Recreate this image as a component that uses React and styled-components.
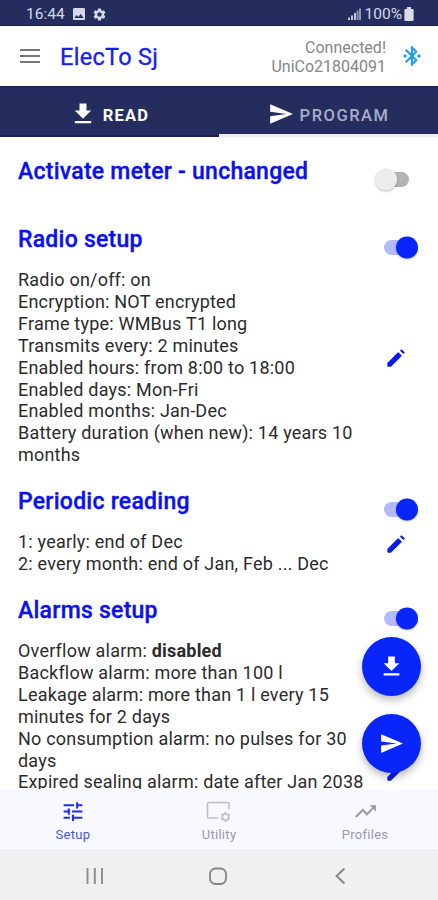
import React from 'react';
import styled, { createGlobalStyle } from 'styled-components';
import {
  MdBluetoothConnected,
  MdFileDownload,
  MdImage,
  MdSend,
  MdSettings,
  MdTrendingUp,
  MdTune,
} from 'react-icons/md';

const radioLines = [
  'Radio on/off: on',
  'Encryption: NOT encrypted',
  'Frame type: WMBus T1 long',
  'Transmits every: 2 minutes',
  'Enabled hours: from 8:00 to 18:00',
  'Enabled days: Mon-Fri',
  'Enabled months: Jan-Dec',
  'Battery duration (when new): 14 years 10 months',
];

const readingLines = [
  '1: yearly: end of Dec',
  '2: every month: end of Jan, Feb ... Dec',
];

const alarmLines = [
  <>
    Overflow alarm: <b>disabled</b>
  </>,
  'Backflow alarm: more than 100 l',
  'Leakage alarm: more than 1 l every 15 minutes for 2 days',
  'No consumption alarm: no pulses for 30 days',
  'Expired sealing alarm: date after Jan 2038',
];

const Pencil = () => (
  <svg
    width="24"
    height="24"
    viewBox="0 0 24 24"
    fill="currentColor"
    stroke="currentColor"
    strokeLinejoin="round"
  >
    <path d="M4 17.3V20h2.7L17 9.8 14.200 7z" strokeWidth="1.3" />
    <path d="M20.3 6.500 17.500 3.700 16.500 4.700 19.300 7.500z" strokeWidth="1" />
  </svg>
);

const Signal = () => (
  <svg width="13" height="13" viewBox="0 0 13 13">
    <path
      d="M0 9.5h2V12H0zM3 7.5h2V12H3zM6 5h2v7H6z"
      fill="#c3c7de"
    />
    <path d="M8.6 2.5h2V12h-2zM11 .5h2V12h-2z" fill="#8f95b8" />
  </svg>
);

const Battery = () => (
  <svg width="10" height="14" viewBox="0 0 10 14" fill="#d9dbe8">
    <path d="M3 0h4v2h1.6q1 0 1 1v10q0 1-1 1H1.4q-1 0-1-1V3q0-1 1-1H3z" />
  </svg>
);

const UtilityIcon = () => (
  <svg width="26" height="22" viewBox="0 0 26 22" fill="none" stroke="#bcbeca">
    <path d="M12 17.5H2.5q-1 0-1-1V3q0-1 1-1H22q1 0 1 1v6" strokeWidth="1.5" />
    <circle cx="19.5" cy="16.5" r="3.2" strokeWidth="1.6" />
    <path
      d="M19.5 11.5v1.6M19.5 20v1.6M15.2 14l1.4.8M22.4 18.2l1.4.8M15.2 19l1.4-.8M22.4 14.8l1.4-.8"
      strokeWidth="1.9"
    />
  </svg>
);

const Section = ({ title, on, lines, tall }) => (
  <Block>
    <TitleRow>
      <Title>{title}</Title>
      <Switch $on={on} />
    </TitleRow>
    {lines && (
      <Body $tall={tall}>
        <Lines>
          {lines.map((line, i) => (
            <p key={i}>{line}</p>
          ))}
        </Lines>
        <EditButton aria-label="Edit">
          <Pencil />
        </EditButton>
      </Body>
    )}
  </Block>
);

const App = () => (
  <>
    <GlobalStyle />
    <Screen>
      <StatusBar>
        <Clock>16:44</Clock>
        <MdImage size={16} />
        <MdSettings size={15} />
        <StatusRight>
          <Signal />
          <span>100%</span>
          <Battery />
        </StatusRight>
      </StatusBar>
      <Header>
        <MenuButton aria-label="Menu">
          <i />
          <i />
          <i />
        </MenuButton>
        <AppName>ElecTo Sj</AppName>
        <Connection>
          Connected!
          <br />
          UniCo21804091
        </Connection>
        <MdBluetoothConnected size={24} color="#1a9cf0" />
      </Header>
      <Tabs>
        <Tab $active>
          <MdFileDownload size={28} color="#fff" />
          <span>READ</span>
        </Tab>
        <Tab>
          <MdSend size={26} color="#fff" />
          <span>PROGRAM</span>
        </Tab>
      </Tabs>
      <Content>
        <Section title="Activate meter - unchanged" />
        <Section title="Radio setup" on lines={radioLines} />
        <Section title="Periodic reading" on lines={readingLines} />
        <Section title="Alarms setup" on lines={alarmLines} tall />
      </Content>
      <Fabs>
        <Fab aria-label="Read">
          <MdFileDownload size={27} />
        </Fab>
        <Fab aria-label="Program">
          <MdSend size={25} />
        </Fab>
      </Fabs>
      <BottomNav>
        <NavItem $active>
          <MdTune size={26} />
          <span>Setup</span>
        </NavItem>
        <NavItem>
          <UtilityIcon />
          <span>Utility</span>
        </NavItem>
        <NavItem>
          <MdTrendingUp size={25} />
          <span>Profiles</span>
        </NavItem>
      </BottomNav>
      <SystemBar>
        <svg width="18" height="18" viewBox="0 0 18 18" stroke="#8b8b8b">
          <path d="M1.5 1v16M8.8 1v16M16 1v16" strokeWidth="1.9" />
        </svg>
        <svg width="18" height="18" viewBox="0 0 18 18" fill="none" stroke="#858585">
          <rect x="1" y="1.5" width="16" height="15.5" rx="5.5" strokeWidth="1.8" />
        </svg>
        <svg width="18" height="18" viewBox="0 0 18 18" fill="none" stroke="#858585">
          <path d="M12.5 1.5 4.5 9l8 7.5" strokeWidth="1.8" />
        </svg>
      </SystemBar>
    </Screen>
  </>
);
export default App;

const GlobalStyle = createGlobalStyle`
  * {
    box-sizing: border-box;
  }
  body {
    margin: 0;
    font-family: Roboto, sans-serif;
  }
  p, h1, h2 {
    margin: 0;
  }
  button {
    border: 0;
    padding: 0;
    background: none;
    font: inherit;
  }
  svg {
    display: block;
    flex-shrink: 0;
  }
`;
const Screen = styled.div`
  position: relative;
  display: flex;
  flex-direction: column;
  width: 438px;
  height: 900px;
  overflow: hidden;
  background: #fff;
`;
const StatusBar = styled.div`
  display: flex;
  align-items: center;
  gap: 5px;
  height: 26px;
  padding: 3px 24px 0 26px;
  background: #252d5e;
  border-bottom: 1px solid #191d52;
  color: #d5d8e8;
  font-size: 15.5px;
  flex-shrink: 0;
`;
const Clock = styled.span`
  margin-right: 1px;
`;
const StatusRight = styled.div`
  display: flex;
  align-items: center;
  gap: 2px;
  margin-left: auto;
  span {
    margin-left: 2px;
  }
`;
const Header = styled.header`
  display: flex;
  align-items: center;
  height: 60px;
  padding: 0 14px 0 20px;
  flex-shrink: 0;
`;
const MenuButton = styled.button`
  display: flex;
  flex-direction: column;
  gap: 4px;
  width: 20px;
  margin-right: 20px;
  i {
    height: 2px;
    background: #777;
  }
`;
const AppName = styled.h1`
  padding-top: 2px;
  font-size: 23.5px;
  font-weight: 400;
  line-height: 28px;
  letter-spacing: 0.3px;
  color: #1620f2;
  -webkit-text-stroke: 0.3px #1620f2;
`;
const Connection = styled.p`
  margin-left: auto;
  margin-right: 14px;
  padding-top: 2px;
  text-align: right;
  font-size: 16px;
  line-height: 19px;
  color: #858585;
`;
const Tabs = styled.nav`
  display: grid;
  grid-template-columns: 1fr 1fr;
  height: 51px;
  background: #252d5e;
  border-top: 1px solid #191d52;
  flex-shrink: 0;
`;
const Tab = styled.div`
  display: flex;
  align-items: center;
  justify-content: center;
  gap: 6px;
  padding-top: ${({ $active }) => ($active ? '5px' : '6px')};
  padding-right: ${({ $active }) => ($active ? '1px' : '0')};
  border-bottom: ${({ $active }) =>
    $active ? '2px solid #191d52' : '3px solid #eeeef2'};
  color: ${({ $active }) => ($active ? '#fff' : '#a9adcb')};
  font-size: 16.5px;
  font-weight: ${({ $active }) => ($active ? 700 : 500)};
  letter-spacing: ${({ $active }) => ($active ? '1.2px' : '1.5px')};
  span {
    padding-top: 3px;
  }
`;
const Content = styled.main`
  display: flex;
  flex-direction: column;
  gap: 21px;
  flex: 1;
  min-height: 0;
  overflow: hidden;
  padding: 20px 20px 0 18px;
`;
const Block = styled.section`
  flex-shrink: 0;
  &:first-child {
    margin-bottom: 19px;
  }
`;
const TitleRow = styled.div`
  display: flex;
  justify-content: space-between;
  height: 28px;
`;
const Title = styled.h2`
  padding-top: 1px;
  font-size: 23px;
  font-weight: 500;
  line-height: 28px;
  letter-spacing: 0.25px;
  color: #0b10ee;
  -webkit-text-stroke: 0.35px #0b10ee;
`;
const Switch = styled.div`
  width: 26px;
  height: 15px;
  margin-top: 15px;
  margin-right: ${({ $on }) => ($on ? '8px' : '9px')};
  border-radius: 8px;
  background: ${({ $on }) => ($on ? '#b3baf7' : '#b2b2b2')};
  &::before {
    content: '';
    display: block;
    width: 22px;
    height: 22px;
    margin-left: ${({ $on }) => ($on ? '12px' : '-8px')};
    border-radius: 50%;
    background: ${({ $on }) => ($on ? '#0826fa' : '#ececec')};
    box-shadow: 0 1px 2px rgba(0, 0, 0, 0.25);
    transform: translateY(-3.5px);
  }
`;
const Body = styled.div`
  display: grid;
  grid-template-columns: 352px 24px;
  justify-content: space-between;
  align-items: center;
  margin-top: 16px;
  padding-right: 10px;
  min-height: ${({ $tall }) => ($tall ? '284px' : '0')};
`;
const Lines = styled.div`
  align-self: start;
  font-size: 18px;
  line-height: 21.9px;
  letter-spacing: 0.21px;
  color: #2b2b2b;
`;
const EditButton = styled.button`
  padding-bottom: 19px;
  color: #0a1bf0;
`;
const Fabs = styled.div`
  position: absolute;
  right: 17px;
  top: 637px;
  display: flex;
  flex-direction: column;
  gap: 18px;
`;
const Fab = styled.button`
  display: flex;
  align-items: center;
  justify-content: center;
  width: 59px;
  height: 59px;
  border-radius: 50%;
  background: #0826fa;
  color: #fff;
  box-shadow: 0 4px 8px rgba(0, 0, 0, 0.28);
`;
const BottomNav = styled.nav`
  display: grid;
  grid-template-columns: repeat(3, 1fr);
  height: 60px;
  background: #f7f9fe;
  flex-shrink: 0;
`;
const NavItem = styled.div`
  display: flex;
  flex-direction: column;
  align-items: center;
  padding-top: 10px;
  color: ${({ $active }) => ($active ? '#1f2cf0' : '#9899ad')};
  font-size: 13px;
  letter-spacing: 0.3px;
  line-height: 16px;
  svg {
    height: 25px;
  }
  span {
    margin-top: 3px;
    color: ${({ $active }) => ($active ? '#4a55e8' : '#9899ad')};
  }
`;
const SystemBar = styled.div`
  display: flex;
  align-items: center;
  justify-content: space-between;
  height: 51px;
  padding: 2px 88px 0 86px;
  background: #f0f0f0;
  flex-shrink: 0;
`;
